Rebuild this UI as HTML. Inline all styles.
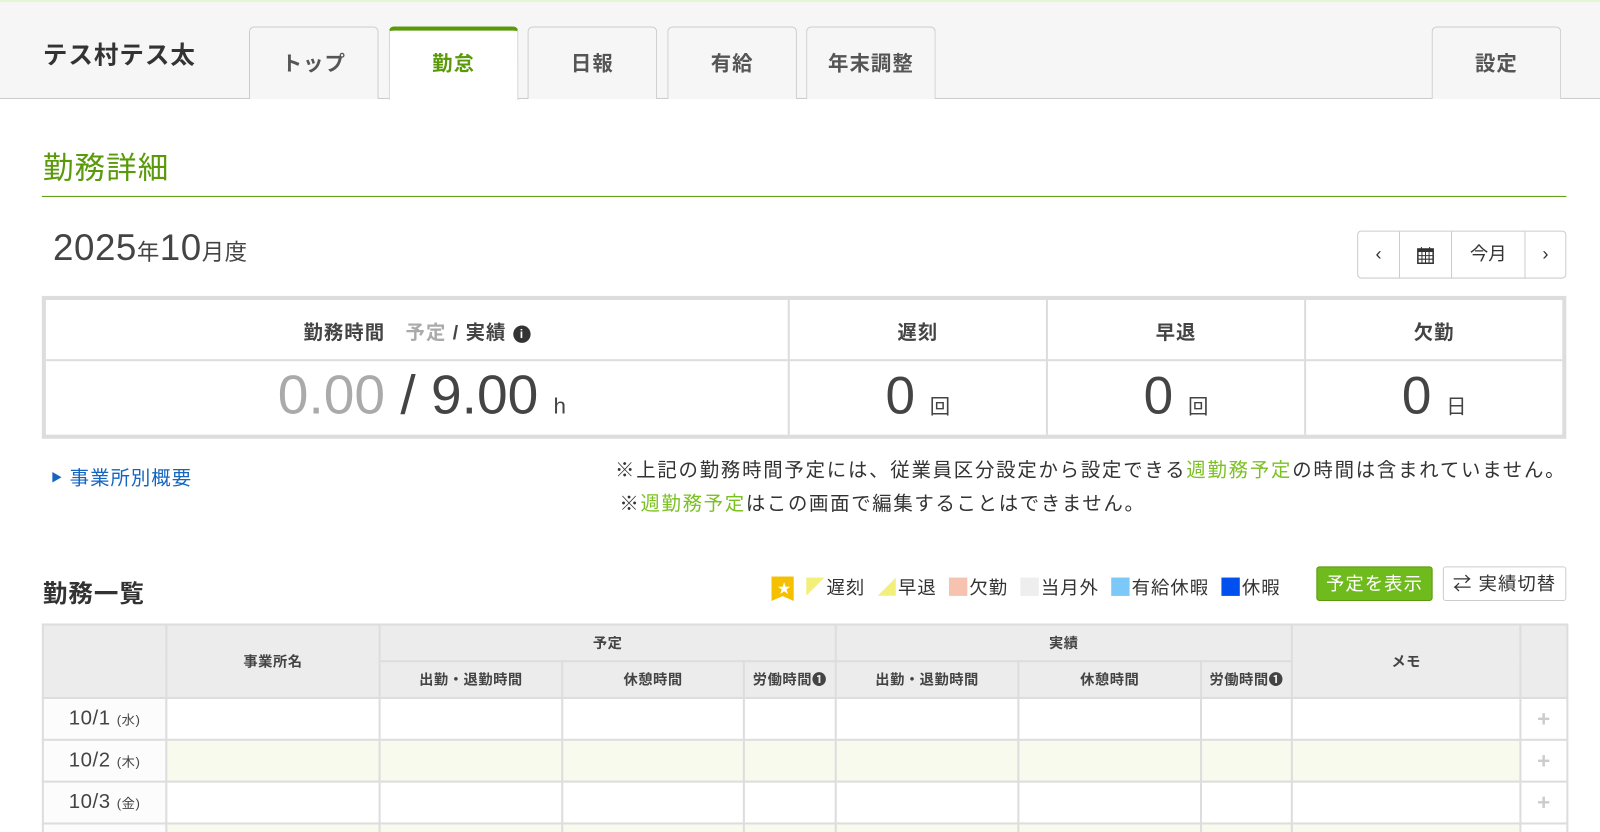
<!DOCTYPE html>
<html><head><meta charset="utf-8"><style>
*{box-sizing:border-box;margin:0;padding:0}
html,body{width:1600px;height:832px;overflow:hidden;background:#fff}
body{font-family:"Liberation Sans","Noto Sans CJK JP",sans-serif;color:#333;position:relative}
#w{position:absolute;left:0;top:0;width:1568px;height:816px;transform:scale(1.020408);transform-origin:0 0}
.a{position:absolute}
.hdr{left:0;top:0;width:1568px;height:97px;background:#f6f6f6;border-top:2px solid #e4f5d4;border-bottom:1px solid #ccc}
.tab{position:absolute;top:26px;height:71px;width:127px;border:1px solid #ccc;border-bottom:none;border-radius:5px 5px 0 0;background:#f6f6f6;text-align:center;line-height:72px;font-size:20px;font-weight:bold;color:#555;letter-spacing:1px}
.tab.on{background:#fff;border-top:4px solid #5a9a0a;color:#5a9a0a;height:72px;line-height:66px}
.cell{position:absolute;text-align:center}
table{border-collapse:collapse;position:absolute;left:41px;top:611px;width:1494px;table-layout:fixed}
td,th{border:2px solid #ddd;font-size:14px;font-weight:bold;color:#444;letter-spacing:.5px}
th{background:#ececec;height:36px}
td{height:41px}
.d{background:#fcfcfc;text-align:center;font-size:20px;font-weight:normal;color:#444}
.lg{display:inline-block;width:18px;height:18px;vertical-align:-2px;margin-left:8px;margin-right:2px}
</style></head><body><div id="w">
<div class="a hdr"></div>
<div class="a" style="left:42px;top:34px;font-size:24px;font-weight:bold;color:#333;letter-spacing:1px">テス村テス太</div>
<div class="tab" style="left:244px">トップ</div>
<div class="tab on" style="left:381px">勤怠</div>
<div class="tab" style="left:517px">日報</div>
<div class="tab" style="left:654px">有給</div>
<div class="tab" style="left:790px">年末調整</div>
<div class="tab" style="left:1403px">設定</div>

<div class="a" style="left:42px;top:140px;font-size:30px;color:#5a9a0a;letter-spacing:1px">勤務詳細</div>
<div class="a" style="left:41px;top:192px;width:1494px;height:1px;background:#5a9a0a"></div>
<div class="a" style="left:52px;top:222px;font-size:36px;color:#444;letter-spacing:.5px">2025<span style="font-size:22px">年</span>10<span style="font-size:22px">月度</span></div>

<div class="a" style="left:1330px;top:226px;width:205px;height:47px;border:1px solid #ccc;border-radius:4px;display:flex;font-size:18px;color:#333">
<div style="width:41px;border-right:1px solid #ccc;text-align:center;line-height:45px">‹</div>
<div style="width:51px;border-right:1px solid #ccc;display:flex;align-items:center;justify-content:center"><svg width="18" height="18" viewBox="0 0 18 18"><rect x="1.5" y="3" width="15" height="14" fill="none" stroke="#333" stroke-width="1.5"/><rect x="1.5" y="3" width="15" height="3" fill="#333"/><path d="M5 1v4M13 1v4M1.5 9.5h15M1.5 13h15M5.5 6v11M9 6v11M12.5 6v11" stroke="#333" stroke-width="1"/></svg></div>
<div style="width:72px;border-right:1px solid #ccc;text-align:center;line-height:45px">今月</div>
<div style="flex:1;text-align:center;line-height:45px">›</div>
</div>

<div class="a" style="left:41px;top:290px;width:1494px;height:140px;border:4px solid #ddd"></div>
<div class="a" style="left:45px;top:352px;width:1486px;height:2px;background:#ddd"></div>
<div class="a" style="left:772px;top:294px;width:2px;height:132px;background:#ddd"></div>
<div class="a" style="left:1025px;top:294px;width:2px;height:132px;background:#ddd"></div>
<div class="a" style="left:1278px;top:294px;width:2px;height:132px;background:#ddd"></div>
<div class="cell" style="left:45px;width:727px;top:311px;font-size:19px;font-weight:bold;color:#444;letter-spacing:1px">勤務時間　<span style="color:#aaa">予定</span> / 実績 <span style="display:inline-block;width:17px;height:17px;border-radius:50%;background:#333;color:#fff;font-size:12px;line-height:17px;vertical-align:1px;letter-spacing:0">i</span></div>
<div class="cell" style="left:774px;width:251px;top:311px;font-size:19px;font-weight:bold;color:#444;letter-spacing:1px">遅刻</div>
<div class="cell" style="left:1027px;width:251px;top:311px;font-size:19px;font-weight:bold;color:#444;letter-spacing:1px">早退</div>
<div class="cell" style="left:1280px;width:251px;top:311px;font-size:19px;font-weight:bold;color:#444;letter-spacing:1px">欠勤</div>
<div class="cell" style="left:45px;width:727px;top:356px;font-size:54px;color:#444;padding-left:10px"><span style="color:#aaa">0.00</span> / 9.00 <span style="font-size:22px">h</span></div>
<div class="cell" style="left:774px;width:251px;top:358px;font-size:52px;color:#444;padding-left:0px">0 <span style="font-size:20px">回</span></div>
<div class="cell" style="left:1027px;width:251px;top:358px;font-size:52px;color:#444;padding-left:0px">0 <span style="font-size:20px">回</span></div>
<div class="cell" style="left:1280px;width:251px;top:358px;font-size:52px;color:#444;padding-left:0px">0 <span style="font-size:20px">日</span></div>

<div class="a" style="left:50px;top:454px;font-size:19px;color:#1565c0;letter-spacing:1px"><span style="font-size:11px;vertical-align:3px">▶</span> 事業所別概要</div>
<div class="a" style="left:435px;top:445px;font-size:19px;color:#333;text-align:right;line-height:33px;width:1100px;letter-spacing:1.75px;white-space:nowrap">※上記の勤務時間予定には、従業員区分設定から設定できる<span style="color:#7ac121">週勤務予定</span>の時間は含まれていません。</div>
<div class="a" style="left:607px;top:478px;font-size:19px;color:#333;line-height:33px;letter-spacing:1.65px;white-space:nowrap">※<span style="color:#7ac121">週勤務予定</span>はこの画面で編集することはできません。</div>

<div class="a" style="left:42px;top:562px;font-size:24px;font-weight:bold;color:#333;letter-spacing:1px">勤務一覧</div>
<div class="a" style="left:756px;top:565px;width:22px;height:24px;background:#f5c000;clip-path:polygon(0 0,100% 0,100% 100%,50% 80%,0 100%)"></div>
<div class="a" style="left:762px;top:566px;color:#fff;font-size:13px">★</div>
<div class="a" style="left:782px;top:566px;font-size:18px;color:#333;white-space:nowrap;line-height:20px;letter-spacing:1px">
<span class="lg" style="background:#f3ef7b;clip-path:polygon(0 0,100% 0,0 100%)"></span>遅刻<span class="lg" style="background:#f3ef7b;clip-path:polygon(100% 0,100% 100%,0 100%);margin-left:12px"></span>早退<span class="lg" style="background:#f5c3b0;margin-left:12px"></span>欠勤<span class="lg" style="background:#eee;margin-left:12px"></span>当月外<span class="lg" style="background:#7cc8f8;margin-left:12px"></span>有給休暇<span class="lg" style="background:#0050f0;margin-left:12px"></span>休暇</div>
<div class="a" style="left:1290px;top:555px;width:114px;height:34px;background:#6fba1c;border:1px solid #5a9a0a;border-radius:3px;color:#fff;font-size:18px;text-align:center;line-height:32px;letter-spacing:1px">予定を表示</div>
<div class="a" style="left:1414px;top:555px;width:121px;height:34px;background:#fff;border:1px solid #ccc;border-radius:3px;color:#333;font-size:18px;text-align:center;line-height:32px;letter-spacing:1px">⇄ 実績切替</div>

<table>
<colgroup><col style="width:121px"><col style="width:209px"><col style="width:179px"><col style="width:178px"><col style="width:90px"><col style="width:179px"><col style="width:179px"><col style="width:89px"><col style="width:224px"><col style="width:46px"></colgroup>
<tr><th rowspan="2"></th><th rowspan="2">事業所名</th><th colspan="3">予定</th><th colspan="3">実績</th><th rowspan="2">メモ</th><th rowspan="2"></th></tr>
<tr><th>出勤・退勤時間</th><th>休憩時間</th><th>労働時間❶</th><th>出勤・退勤時間</th><th>休憩時間</th><th>労働時間❶</th></tr>
<tr><td class="d">10/1 <span style="font-size:13px">(水)</span></td><td></td><td></td><td></td><td></td><td></td><td></td><td></td><td></td><td style="text-align:center;color:#ccc;font-size:22px">+</td></tr>
<tr style="background:#f8faee"><td class="d">10/2 <span style="font-size:13px">(木)</span></td><td></td><td></td><td></td><td></td><td></td><td></td><td></td><td></td><td style="background:#fff;text-align:center;color:#ccc;font-size:22px">+</td></tr>
<tr><td class="d">10/3 <span style="font-size:13px">(金)</span></td><td></td><td></td><td></td><td></td><td></td><td></td><td></td><td></td><td style="text-align:center;color:#ccc;font-size:22px">+</td></tr>
<tr style="background:#f8faee"><td class="d"></td><td></td><td></td><td></td><td></td><td></td><td></td><td></td><td></td><td style="background:#fff"></td></tr>
</table>
</div></body></html>
